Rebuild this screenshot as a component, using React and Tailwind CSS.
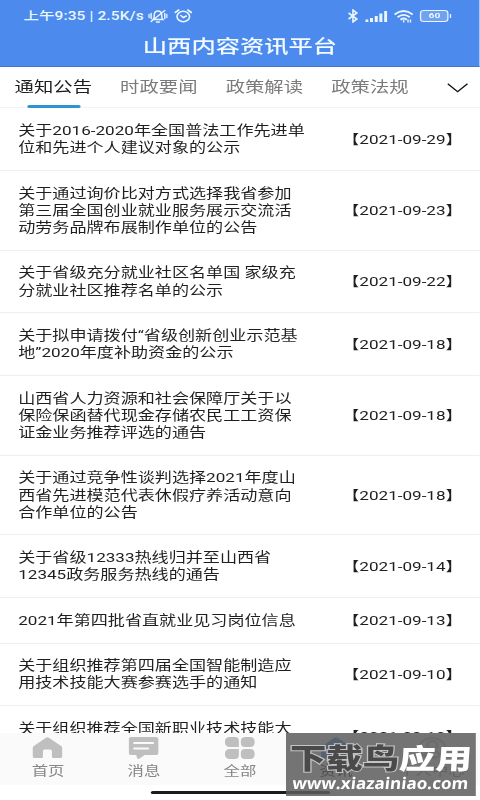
import React, { useState } from 'react';

const tabs = ['通知公告', '时政要闻', '政策解读', '政策法规'];

const notices = [
  { lines: ['关于2016-2020年全国普法工作先进单', '位和先进个人建议对象的公示'], date: '2021-09-29' },
  { lines: ['关于通过询价比对方式选择我省参加', '第三届全国创业就业服务展示交流活', '动劳务品牌布展制作单位的公告'], date: '2021-09-23' },
  { lines: ['关于省级充分就业社区名单国 家级充', '分就业社区推荐名单的公示'], date: '2021-09-22' },
  { lines: ['关于拟申请拨付“省级创新创业示范基', '地”2020年度补助资金的公示'], date: '2021-09-18' },
  { lines: ['山西省人力资源和社会保障厅关于以', '保险保函替代现金存储农民工工资保', '证金业务推荐评选的通告'], date: '2021-09-18' },
  { lines: ['关于通过竞争性谈判选择2021年度山', '西省先进模范代表休假疗养活动意向', '合作单位的公告'], date: '2021-09-18' },
  { lines: ['关于省级12333热线归并至山西省', '12345政务服务热线的通告'], date: '2021-09-14' },
  { lines: ['2021年第四批省直就业见习岗位信息'], date: '2021-09-13' },
  { lines: ['关于组织推荐第四届全国智能制造应', '用技术技能大赛参赛选手的通知'], date: '2021-09-10' },
  { lines: ['关于组织推荐全国新职业技术技能大'], date: '2021-09-10' },
];

const HomeIcon = () => (
  <svg viewBox="0 0 30 22" preserveAspectRatio="none" className="h-[22px] w-[23px]" fill="currentColor">
    <path d="M13.5 .7a2.5 2.5 0 0 1 3 0L29 9.2c1 .8 1 1.8 1 2.4V19a2 2 0 0 1-2 2h-7a1.5 1.5 0 0 1-1.500-1.500V14q0-1.500-1.500-1.500h-6Q10.500 12.500 10.500 14v5.500A1.500 1.500 0 0 1 9 21H2a2 2 0 0 1-2-2v-7.400C0 11 0 10 1 9.200z" />
  </svg>
);

const MessageIcon = () => (
  <svg viewBox="0 0 30 22" preserveAspectRatio="none" className="h-[22px] w-[23px]">
    <path d="M2.500 0h25A2.500 2.500 0 0 1 30 2.500v13a2.500 2.500 0 0 1-2.500 2.500H16l-5 3.500q-2 1-2.500-.5L7.500 18h-5A2.500 2.500 0 0 1 0 15.500v-13A2.500 2.500 0 0 1 2.500 0z" fill="currentColor" />
    <path d="M5.500 6h19M5.500 11.500h14" stroke="#fafafa" strokeWidth="2" strokeLinecap="round" />
  </svg>
);

const GridIcon = () => (
  <svg viewBox="0 0 30 22" preserveAspectRatio="none" className="h-[22px] w-[23px]" fill="currentColor">
    <path d="M5 0h5q4 0 4 4v6H5Q0 10 0 5t5-5zM21 0h4q5 0 5 5t-5 5h-5q-4 0-4-4V4q0-4 5-4zM5 12h9v6q0 4-4 4H5q-5 0-5-5t5-5zM20 12h5q5 0 5 5t-5 5h-5q-4 0-4-4v-2q0-4 4-4z" />
  </svg>
);

const UserIcon = () => (
  <svg viewBox="0 0 30 22" preserveAspectRatio="none" className="h-[22px] w-[23px]" fill="none" stroke="currentColor" strokeWidth="2">
    <ellipse cx="15" cy="11" rx="13" ry="10" />
    <ellipse cx="15" cy="8" rx="5" ry="4" />
    <path d="M6 18q9-8 18 0" />
  </svg>
);

const navItems = [
  { label: '首页', icon: HomeIcon },
  { label: '消息', icon: MessageIcon },
  { label: '全部', icon: GridIcon },
  { label: '资讯', icon: HomeIcon, active: true },
  { label: '个人中心', icon: UserIcon },
];

const StatusBar = () => (
  <div className="flex h-8 items-center justify-between pl-[18px] pr-[22px] text-[#e9f6ff]">
    <div className="flex items-center">
      <span className="w-[96px] whitespace-nowrap pt-px text-[11.9px] font-medium tracking-[0.1px]">上午9:35 | 2.5K/s</span>
      <svg viewBox="0 0 20 14" preserveAspectRatio="none" className="h-[14px] w-[15px]" fill="none" stroke="currentColor" strokeWidth="1.500" strokeLinecap="round">
        <path d="M5 10.500h10c-1.500-1.500-1-3-1.200-5C13.500 3 12 2 10 2S6.500 3 6.200 5.500C6 7.500 6.500 9 5 10.500zM8.500 13h3M3 12.500L17 1.500M3 4.500v5M.8 5.500v3M17 4.500v5M19.200 5.500v3" />
      </svg>
      <svg viewBox="0 0 18 14" preserveAspectRatio="none" className="ml-[5px] h-[14px] w-[14px]" fill="none" stroke="currentColor" strokeWidth="1.600" strokeLinecap="round">
        <ellipse cx="9" cy="7.500" rx="6.200" ry="5.200" />
        <path d="M1 3.500L4.500 1M17 3.500L13.500 1M6.500 6.500L9 8.500l3-1.500" />
      </svg>
    </div>
    <div className="flex items-center">
      <svg viewBox="0 0 12 14" preserveAspectRatio="none" className="h-[14px] w-[9px]" fill="none" stroke="currentColor" strokeWidth="1.600">
        <path d="M1.500 4L10 10 6 13V1l4 3-8.500 6" />
      </svg>
      <svg viewBox="0 0 22 12" preserveAspectRatio="none" className="ml-[5px] h-3 w-[17px]" fill="currentColor">
        <path d="M0 9.500h3V12H0zM4.700 8h3v4h-3zM9.400 6h3v6h-3zM14 3.500h3V12h-3zM18.800 1h3v11h-3z" />
      </svg>
      <svg viewBox="0 0 20 13" preserveAspectRatio="none" className="ml-[5px] h-[13px] w-[15px]" fill="none" stroke="currentColor" strokeWidth="1.900">
        <path d="M.7 4.500q9.300-7 18.600 0M3.700 7.200q6.300-4.700 12.600 0M6.700 9.700q3.300-2.500 6.600 0" />
        <path d="M10 10v2.500M14.500 9.500v3M17 9.500v3" strokeWidth="1.400" />
      </svg>
      <div className="ml-[5px] flex h-[12px] w-[22px] items-center justify-center rounded-[3px] border border-current bg-white/20 text-[8px] font-bold leading-none">60</div>
      <div className="ml-px h-1 w-px bg-current" />
    </div>
  </div>
);

const App = () => {
  const [activeTab, setActiveTab] = useState(0);

  return (
    <div className="h-[800px] w-[480px] overflow-hidden bg-white">
      {/* Wide display: everything is stretched horizontally by 1.3 */}
      <div className="relative flex h-[800px] w-[369.23px] origin-top-left scale-x-[1.3] flex-col overflow-hidden font-[Roboto,'Noto_Sans_CJK_SC',sans-serif] text-[#1f1f1f]">
        <header className="h-[67px] shrink-0 border-b border-[#4577c2] bg-[#4c8bed]">
          <StatusBar />
          <h1 className="text-center text-[18.7px] font-medium leading-[31px] text-[#f2fbff]">山西内容资讯平台</h1>
        </header>

        <nav className="flex h-[41.4px] shrink-0 items-start justify-between border-b border-[#f3f3f3] pl-[11px] pr-[9px]">
          <div className="flex gap-[21.2px]">
            {tabs.map((tab, i) => (
              <button key={tab} onClick={() => setActiveTab(i)} className="flex h-[41px] w-[60px] flex-col items-center">
                <span className={`whitespace-nowrap text-[14.9px] leading-[41px] ${i === activeTab ? 'text-[#1d1d1d]' : 'text-[#7b7b7b]'}`}>{tab}</span>
                {i === activeTab && <span className="-mt-[3px] h-[3px] w-[41px] shrink-0 rounded-full bg-[#2b95d2]" />}
              </button>
            ))}
          </div>
          <svg viewBox="0 0 20 10" preserveAspectRatio="none" className="mt-4 h-[10px] w-[16px]" fill="none" stroke="#111" strokeWidth="1.400">
            <path d="M.5 .7L10 8.700 19.500 .7" />
          </svg>
        </nav>

        <main className="min-h-0 flex-1 overflow-hidden">
          {notices.map((notice) => (
            <div key={notice.lines[0]} className="flex items-center justify-between border-b border-[#eeeeee] py-[13.73px] pl-[14px] pr-[13.3px] text-[13.15px] leading-[17.1px]">
              <div>
                {notice.lines.map((line) => (
                  <p key={line} className="whitespace-nowrap">{line}</p>
                ))}
                {notice === notices[notices.length - 1] && <p className="h-[17px]" />}
              </div>
              <span className="whitespace-nowrap">【{notice.date}】</span>
            </div>
          ))}
        </main>

        <footer className="shrink-0">
          <div className="flex h-[52px] bg-[#fafafa]">
            {navItems.map(({ label, icon: Icon, active }) => (
              <div key={label} className={`flex flex-1 flex-col items-center pt-1 ${active ? 'text-[#3f7fe6]' : 'text-[#bfbfbf]'}`}>
                <Icon />
                <span className={`mt-1 whitespace-nowrap text-[12.6px] leading-4 ${active ? 'text-black' : 'text-[#858585]'}`}>{label}</span>
              </div>
            ))}
          </div>
          <div className="flex h-[15px] items-start justify-center bg-white pt-[6px]">
            <div className="h-[3px] w-[138px] rounded-full bg-[#1b1b1b]" />
          </div>
        </footer>

        {/* Site watermark */}
        <div className="absolute left-[220px] top-[733px] flex h-[63px] w-[146px] flex-col items-center overflow-hidden bg-[#5c5c5c]/85 pt-[8px] text-white">
          <div className="flex text-[28px] font-black leading-[38px]">
            <span className="text-[#4a4a4a] [-webkit-text-stroke:2px_#c4c4c4] [paint-order:stroke_fill]">下载鸟</span>
            <span className="-skew-x-3">应用</span>
          </div>
          <div className="-mt-[5px] scale-x-[0.82] -skew-x-6 whitespace-nowrap font-['Open_Sans',sans-serif] text-[16px] font-bold leading-[18px]">www.xiazainiao.com</div>
        </div>
      </div>
    </div>
  );
};

export default App;
